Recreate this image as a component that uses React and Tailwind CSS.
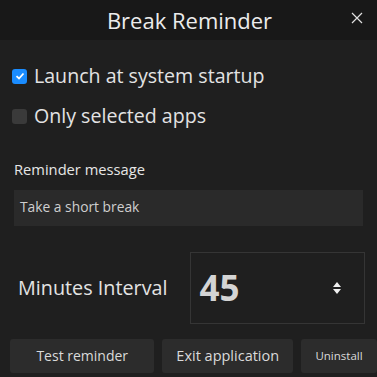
export default function App() {
  return (
    <div
      className="w-[377px] h-[377px] overflow-hidden bg-[#1f1f1f] text-[#e6e6e6] flex flex-col"
      style={{ fontFamily: '"Open Sans", "Noto Sans", sans-serif' }}
    >
      {/* title bar */}
      <div className="h-[40px] bg-[#181818] flex items-center justify-center relative shrink-0">
        <span className="text-[22px] leading-none text-[#ececec] pl-[2px]">Break Reminder</span>
        <span className="absolute right-[14px] top-[12px]">
          <svg width="12" height="12" viewBox="0 0 12 12">
            <path d="M1 1L11 11M11 1L1 11" stroke="#e0e0e0" strokeWidth="1.2" />
          </svg>
        </span>
      </div>

      <div className="flex flex-col px-[12px]">
        <label className="flex items-center gap-[7px] mt-[22px] h-[28px]">
          <span className="w-[15px] h-[15px] rounded-[3px] bg-[#1a8cff] flex items-center justify-center">
            <svg width="10" height="10" viewBox="0 0 10 10">
              <path d="M1.5 5.2L4 7.5L8.5 2.5" stroke="#fff" strokeWidth="1.8" fill="none" />
            </svg>
          </span>
          <span className="text-[19.6px] leading-none text-[#e3e3e3]">Launch at system startup</span>
        </label>
        <label className="flex items-center gap-[7px] mt-[12px] h-[28px]">
          <span className="w-[15px] h-[15px] rounded-[3px] bg-[#3a3a3a]" />
          <span className="text-[19.6px] leading-none text-[#e3e3e3]">Only selected apps</span>
        </label>

        <div className="mt-[32px] pl-[2px] text-[14.7px] leading-none text-[#e6e6e6]">Reminder message</div>
        <div className="mt-[13px] ml-[2px] w-[349px] h-[36px] bg-[#2a2a2a] flex items-center px-[6px] text-[13.8px] text-[#cfcfcf]">
          Take a short break
        </div>

        <div className="mt-[26px] flex items-center">
          <div className="w-[179px] pl-[6px] text-[19.8px] text-[#e3e3e3]">Minutes Interval</div>
          <div className="w-[175px] h-[72px] border border-[#353535] flex items-center justify-between pl-[8px] pr-[22px]">
            <span className="text-[35px] font-bold text-[#d4d4d4] leading-none">45</span>
            <svg width="10" height="14" viewBox="0 0 10 14">
              <path d="M5 1L9 6H1Z M5 13L9 8H1Z" fill="#f0f0f0" />
            </svg>
          </div>
        </div>
      </div>

      <div className="flex gap-[8px] pl-[10px] mt-[15px]">
        <div className="w-[145px] h-[34px] rounded-[3px] bg-[#2c2c2c] flex items-center justify-center text-[14px] text-[#dadada]">
          Test reminder
        </div>
        <div className="w-[131px] h-[34px] rounded-[3px] bg-[#2c2c2c] flex items-center justify-center text-[14.5px] text-[#dadada]">
          Exit application
        </div>
        <div className="w-[76px] h-[34px] rounded-[3px] bg-[#2c2c2c] flex items-center justify-center text-[11.5px] text-[#dadada] shrink-0">
          Uninstall
        </div>
      </div>
    </div>
  );
}
